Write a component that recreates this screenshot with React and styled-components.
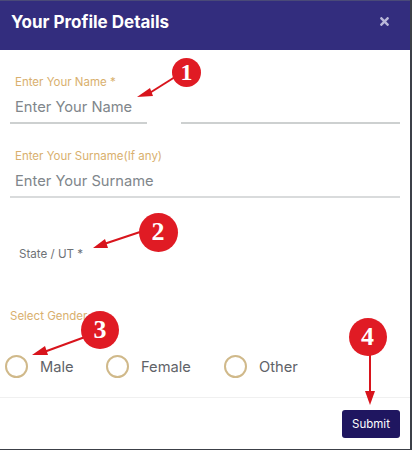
import React from "react";
import styled, { createGlobalStyle } from "styled-components";
import { FaTimes } from "react-icons/fa";

const GlobalStyle = createGlobalStyle`
  html, body {
    margin: 0;
    padding: 0;
    background: #fff;
    overflow: hidden;
  }
  * {
    box-sizing: border-box;
  }
`;

const Modal = styled.div`
  position: relative;
  width: 412px;
  height: 450px;
  display: flex;
  flex-direction: column;
  background: #fff;
  border-right: 2px solid #3c4048;
  border-bottom: 1px solid #3c4048;
  font-family: Inter, "Liberation Sans", sans-serif;
`;

const Header = styled.div`
  height: 50px;
  flex: none;
  display: flex;
  justify-content: space-between;
  padding: 11px 19px 0 11px;
  background: #332d7e;
  border-top: 1px solid #4a4a78;
  color: #fff;
`;

const Title = styled.h2`
  margin: 0;
  font-size: 17px;
  line-height: 20px;
  font-weight: 700;
`;

const Close = styled(FaTimes)`
  margin-top: 3px;
  font-size: 13px;
  color: #b9b8d8;
`;

const Body = styled.div`
  height: 348px;
  flex: none;
  padding: 0 10px;
  border-bottom: 1px solid #f0f0f0;
`;

const Row = styled.div`
  display: flex;
  gap: 34px;
  padding-top: 25px;
`;

const Field = styled.div`
  flex: ${(p) => p.$grow || "none"};
  width: ${(p) => p.$width || "auto"};
  height: 49px;
  padding-left: 5px;
  border-bottom: 2px solid ${(p) => (p.$strong ? "#d9dbdc" : "#cdd0d0")};
`;

const Label = styled.div`
  color: #d9b06e;
  font-size: 11.5px;
  line-height: 14px;
`;

const Placeholder = styled.div`
  margin-top: 6px;
  height: 24px;
  color: #80868b;
  font-size: 14.7px;
  line-height: 24px;
  white-space: nowrap;
`;

const StateLabel = styled.div`
  margin: 49px 0 0 9px;
  color: #6e7276;
  font-size: 11.6px;
  line-height: 14px;
`;

const GenderLabel = styled(Label)`
  margin-top: 48px;
`;

const Options = styled.div`
  display: flex;
  margin: 32px 0 0 -5px;
`;

const Option = styled.div`
  width: ${(p) => p.$width};
  display: flex;
  align-items: center;
  gap: 12px;
  color: #5f6368;
  font-size: 14.7px;
`;

const Radio = styled.span`
  width: 23px;
  height: 23px;
  flex: none;
  border: 2px solid #d0b98a;
  border-radius: 50%;
`;

const Footer = styled.div`
  flex: 1;
  display: flex;
  justify-content: flex-end;
  align-items: flex-start;
  padding: 12px 10px 0 0;
`;

const SubmitButton = styled.button`
  width: 58px;
  height: 28px;
  padding: 0;
  border: none;
  border-radius: 3px;
  background: #1f1660;
  color: #fff;
  font-family: inherit;
  font-size: 11.5px;
`;

const Arrows = styled.svg`
  position: absolute;
  left: 0;
  top: 0;
  pointer-events: none;
`;

const Badge = styled.span`
  position: absolute;
  left: ${(p) => p.$x - p.$size / 2}px;
  top: ${(p) => p.$y - p.$size / 2}px;
  width: ${(p) => p.$size}px;
  height: ${(p) => p.$size}px;
  display: flex;
  align-items: center;
  justify-content: center;
  border-radius: 50%;
  background: #e01b24;
  color: #fff;
  font-family: "Liberation Serif", serif;
  font-size: ${(p) => (p.$size < 30 ? 24 : 26)}px;
  font-weight: 700;
  line-height: 1;
`;

const arrows = [
  { x1: 175, y1: 77, x2: 148, y2: 94, head: "137,97 150,88 153,96" },
  { x1: 140, y1: 232, x2: 104, y2: 244, head: "93,248 105,239 108,248" },
  { x1: 85, y1: 337, x2: 44, y2: 352, head: "32,355 45,346 48,355" },
  { x1: 370, y1: 355, x2: 370, y2: 392, head: "370,405 365,391 375,391" },
];

const badges = [
  { n: 1, x: 186.5, y: 72, size: 29 },
  { n: 2, x: 158, y: 232, size: 39 },
  { n: 3, x: 100, y: 330, size: 38 },
  { n: 4, x: 367.5, y: 337, size: 38 },
];

const App = () => {
  return (
    <Modal>
      <GlobalStyle />
      <Header>
        <Title>Your Profile Details</Title>
        <Close />
      </Header>
      <Body>
        <Row>
          <Field $width="137px">
            <Label>Enter Your Name *</Label>
            <Placeholder>Enter Your Name</Placeholder>
          </Field>
          <Field $grow="1" />
        </Row>
        <Row>
          <Field $grow="1" $strong>
            <Label>Enter Your Surname(If any)</Label>
            <Placeholder>Enter Your Surname</Placeholder>
          </Field>
        </Row>
        <StateLabel>State / UT *</StateLabel>
        <GenderLabel>Select Gender</GenderLabel>
        <Options>
          <Option $width="101px">
            <Radio />
            Male
          </Option>
          <Option $width="118px">
            <Radio />
            Female
          </Option>
          <Option $width="100px">
            <Radio />
            Other
          </Option>
        </Options>
      </Body>
      <Footer>
        <SubmitButton>Submit</SubmitButton>
      </Footer>
      <Arrows width="412" height="450" viewBox="0 0 412 450">
        {arrows.map((a) => (
          <g key={a.head} fill="#d8141c" stroke="#d8141c">
            <line x1={a.x1} y1={a.y1} x2={a.x2} y2={a.y2} strokeWidth="2" />
            <polygon points={a.head} strokeWidth="0" />
          </g>
        ))}
      </Arrows>
      {badges.map((b) => (
        <Badge key={b.n} $x={b.x} $y={b.y} $size={b.size}>
          {b.n}
        </Badge>
      ))}
    </Modal>
  );
};

export default App;
